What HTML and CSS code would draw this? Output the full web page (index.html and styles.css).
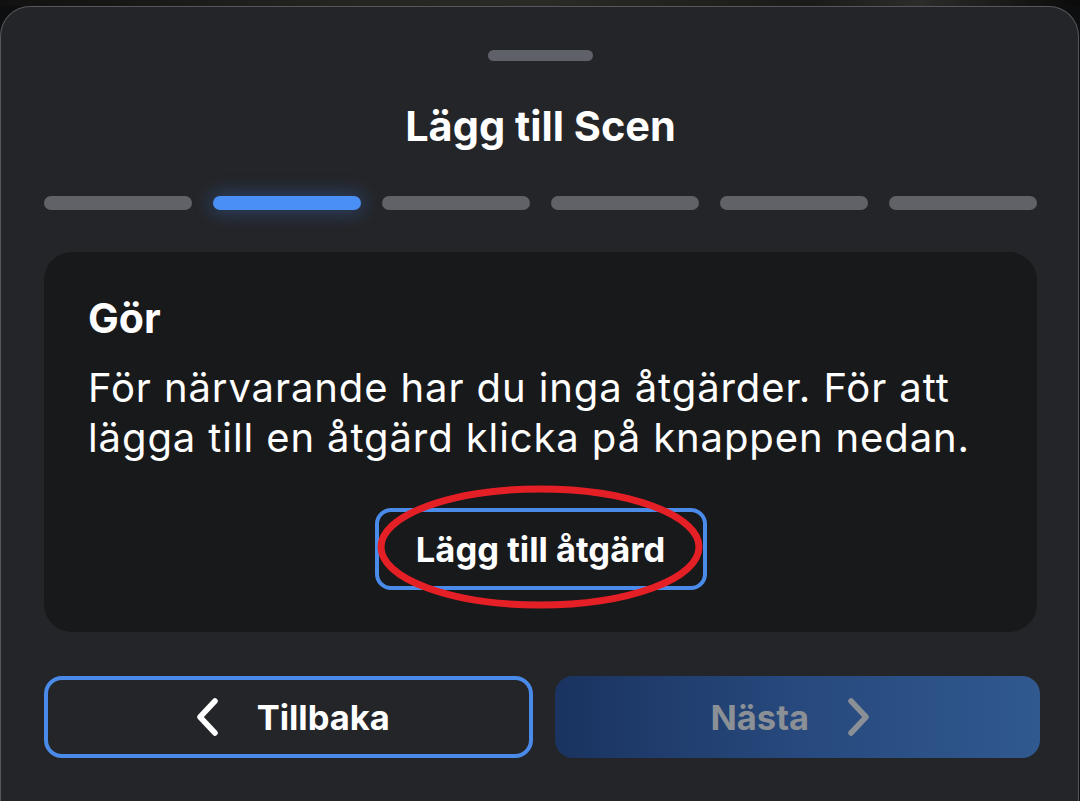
FILE: index.html
```html
<!DOCTYPE html>
<html lang="sv">
<head>
<meta charset="utf-8">
<link rel="stylesheet" href="styles.css">
</head>
<body>
<div class="backdrop"></div>
<div class="sheet">
  <div class="handle"></div>
  <h1 class="title">Lägg till Scen</h1>
  <div class="steps">
    <span class="step"></span>
    <span class="step active"></span>
    <span class="step"></span>
    <span class="step"></span>
    <span class="step"></span>
    <span class="step"></span>
  </div>
  <div class="card">
    <h2 class="card-title">Gör</h2>
    <p class="card-text">För närvarande har du inga åtgärder. För att lägga till en åtgärd klicka på knappen nedan.</p>
    <div class="add-wrap">
      <button class="add-btn">Lägg till åtgärd</button>
      <svg class="circle-mark" viewBox="0 0 330 126" width="330" height="126">
        <ellipse cx="164" cy="63" rx="159" ry="58" fill="none" stroke="#e51f26" stroke-width="7"/>
      </svg>
    </div>
  </div>
  <div class="nav">
    <button class="nav-btn back">
      <svg width="24" height="38" viewBox="0 0 24 38"><path d="M20 3 L5 19 L20 35" fill="none" stroke="#fff" stroke-width="5.5" stroke-linecap="round" stroke-linejoin="round"/></svg>
      <span>Tillbaka</span>
    </button>
    <button class="nav-btn next">
      <span>Nästa</span>
      <svg width="24" height="38" viewBox="0 0 24 38"><path d="M4 3 L19 19 L4 35" fill="none" stroke="#8b8f96" stroke-width="5.5" stroke-linecap="round" stroke-linejoin="round"/></svg>
    </button>
  </div>
</div>
</body>
</html>
```

FILE: styles.css
```css
* { box-sizing: border-box; }
html, body {
  margin: 0;
  padding: 0;
  background: #0d0e0f;
  width: 1080px;
  height: 801px;
  overflow: hidden;
  font-family: Inter, "Noto Sans", sans-serif;
  color: #fff;
}
.backdrop {
  height: 6px;
  background: linear-gradient(90deg, #101110 0%, #232420 30%, #2a2b25 50%, #1a1b18 75%, #2c2d2b 85%, #0a0a0a 100%);
}
.sheet {
  width: 1079px;
  height: 795px;
  background: #242528;
  border: 1px solid #55575c;
  border-bottom: none;
  border-radius: 30px 30px 0 0;
  display: flex;
  flex-direction: column;
  align-items: stretch;
  padding: 0 41px 0 43px;
}
.handle {
  align-self: center;
  width: 105px;
  height: 11px;
  border-radius: 6px;
  background: #5f6168;
  margin-top: 43px;
}
.title {
  margin: 40px 0 0;
  text-align: center;
  font-size: 41.5px;
  font-weight: 700;
  line-height: 50px;
}
.steps {
  display: flex;
  gap: 21px;
  margin-top: 45px;
}
.step {
  flex: 1;
  height: 14px;
  border-radius: 7px;
  background: #606268;
}
.step.active {
  background: #4a8ff5;
  box-shadow: 0 0 18px 4px rgba(60, 130, 240, 0.28);
}
.card {
  margin-top: 42px;
  background: #18191b;
  border-radius: 28px;
  padding: 41px 44px 42px;
  display: flex;
  flex-direction: column;
}
.card-title {
  margin: 0;
  font-size: 41px;
  font-weight: 700;
  line-height: 50px;
}
.card-text {
  margin: 20px 0 0;
  font-size: 40px;
  font-weight: 400;
  line-height: 50px;
  letter-spacing: 0.9px;
}
.add-wrap {
  position: relative;
  align-self: center;
  margin-top: 45px;
}
.add-btn {
  display: block;
  width: 332px;
  height: 82px;
  background: transparent;
  border: 4px solid #4a8be9;
  border-radius: 16px;
  color: #fff;
  font-family: Inter, "Noto Sans", sans-serif;
  font-size: 34.5px;
  font-weight: 700;
  padding: 0;
}
.circle-mark {
  position: absolute;
  left: 1px;
  top: -24px;
}
.nav {
  display: flex;
  gap: 22px;
  margin-top: 44px;
  margin-right: -3px;
}
.nav-btn {
  flex: 1;
  height: 82px;
  border-radius: 18px;
  display: flex;
  align-items: center;
  justify-content: center;
  gap: 38px;
  font-family: Inter, "Noto Sans", sans-serif;
  font-size: 34.5px;
  font-weight: 700;
  padding: 0;
}
.nav-btn.back {
  background: #242528;
  border: 4px solid #4a8be9;
  color: #fff;
  padding-left: 8px;
}
.nav-btn.next {
  background: linear-gradient(90deg, #1a3360 0%, #27497d 50%, #30598f 100%);
  border: none;
  color: #8b8f96;
  padding-right: 13px;
}
```
